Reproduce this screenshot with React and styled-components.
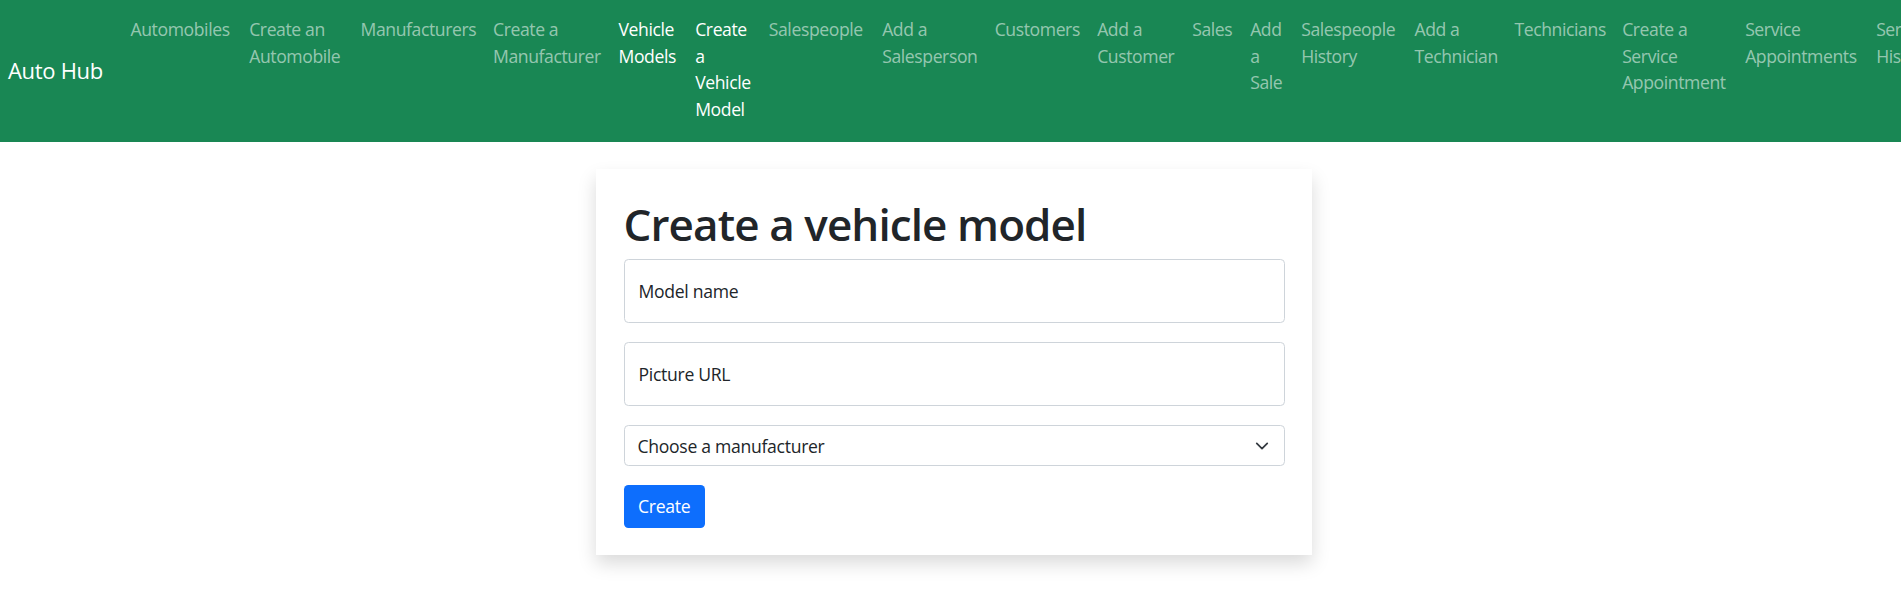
import styled, { createGlobalStyle } from "styled-components";

const GlobalStyle = createGlobalStyle`
  * {
    box-sizing: border-box;
  }
  body {
    margin: 0;
    background: #fff;
    color: #212529;
    font-family: "Open Sans", "Noto Sans", sans-serif;
    overflow-x: hidden;
  }
`;

const links = [
  { lines: ["Automobiles"], w: 118.7 },
  { lines: ["Create an", "Automobile"], w: 111.3 },
  { lines: ["Manufacturers"], w: 132.5 },
  { lines: ["Create a", "Manufacturer"], w: 125.5 },
  { lines: ["Vehicle", "Models"], w: 76.7, active: true },
  { lines: ["Create", "a", "Vehicle", "Model"], w: 73.6, active: true },
  { lines: ["Salespeople"], w: 113.4 },
  { lines: ["Add a", "Salesperson"], w: 112.5 },
  { lines: ["Customers"], w: 102.5 },
  { lines: ["Add a", "Customer"], w: 95 },
  { lines: ["Sales"], w: 58 },
  { lines: ["Add", "a", "Sale"], w: 51 },
  { lines: ["Salespeople", "History"], w: 113.3 },
  { lines: ["Add a", "Technician"], w: 100 },
  { lines: ["Technicians"], w: 107.7 },
  { lines: ["Create a", "Service", "Appointment"], w: 123 },
  { lines: ["Service", "Appointments"], w: 131 },
  { lines: ["Service", "History"], w: 110 },
];

const App = () => {
  return (
    <>
      <GlobalStyle />
      <Navbar>
        <Brand href="#">Auto Hub</Brand>
        <NavList>
          {links.map((link) => (
            <li key={link.lines.join(" ")}>
              <NavLink href="#" $w={link.w} $active={link.active}>
                {link.lines.map((line, i) => (
                  <Line key={i}>{line}</Line>
                ))}
              </NavLink>
            </li>
          ))}
        </NavList>
      </Navbar>

      <Main>
        <Card>
          <Title>Create a vehicle model</Title>
          <form onSubmit={(e) => e.preventDefault()}>
            <Group>
              <TextField type="text" placeholder="Model name" />
            </Group>
            <Group>
              <TextField type="text" placeholder="Picture URL" />
            </Group>
            <Group>
              <SelectWrap>
                <Select defaultValue="">
                  <option value="">Choose a manufacturer</option>
                </Select>
                <Chevron viewBox="0 0 16 16">
                  <path
                    d="m2 5 6 6 6-6"
                    fill="none"
                    stroke="#343a40"
                    strokeWidth="2"
                    strokeLinecap="round"
                    strokeLinejoin="round"
                  />
                </Chevron>
              </SelectWrap>
            </Group>
            <Button type="submit">Create</Button>
          </form>
        </Card>
      </Main>
    </>
  );
};
export default App;

const Navbar = styled.nav`
  display: flex;
  align-items: flex-start;
  height: 142px;
  padding-left: 8px;
  background: #198754;
  overflow: hidden;
`;

const Brand = styled.a`
  flex: none;
  align-self: center;
  width: 113.7px;
  margin-bottom: 2px;
  color: #fff;
  font-size: 22px;
  line-height: 33px;
  letter-spacing: -0.3px;
  text-decoration: none;
  white-space: nowrap;
`;

const NavList = styled.ul`
  display: flex;
  flex: none;
  margin: 0;
  padding: 0;
  list-style: none;
`;

const NavLink = styled.a`
  display: block;
  width: ${(p) => p.$w}px;
  padding: 16px 8.8px 0;
  color: ${(p) => (p.$active ? "#fff" : "rgba(255, 255, 255, 0.55)")};
  font-size: 17.6px;
  line-height: 26.6px;
  letter-spacing: -0.4px;
  text-decoration: none;
  white-space: nowrap;
`;

const Line = styled.span`
  display: block;
`;

const Main = styled.main`
  display: flex;
  justify-content: center;
  padding: 27px 0 40px 7px;
`;

const Card = styled.div`
  width: 716px;
  padding: 28.7px 27.5px 27px;
  background: #fff;
  box-shadow: 0 8.8px 17.6px rgba(0, 0, 0, 0.15);
`;

const Title = styled.h1`
  margin: 0 0 8.8px;
  color: #212529;
  font-size: 44px;
  font-weight: 600;
  line-height: 52.8px;
  letter-spacing: -0.9px;
`;

const Group = styled.div`
  margin-bottom: 19px;
`;

const TextField = styled.input`
  display: block;
  width: 100%;
  height: 64px;
  padding: 0 14px;
  border: 1px solid #ced4da;
  border-radius: 4.4px;
  background: #fff;
  color: #212529;
  font-family: inherit;
  font-size: 17.6px;
  letter-spacing: -0.3px;
  outline: none;

  &::placeholder {
    color: #212529;
    opacity: 1;
  }
`;

const SelectWrap = styled.div`
  position: relative;
`;

const Select = styled.select`
  display: block;
  width: 100%;
  height: 41px;
  padding: 0 40px 0 13px;
  border: 1px solid #ced4da;
  border-radius: 4.4px;
  background: #fff;
  color: #212529;
  font-family: inherit;
  font-size: 17.6px;
  letter-spacing: -0.3px;
  appearance: none;
  outline: none;
`;

const Chevron = styled.svg`
  position: absolute;
  top: 50%;
  right: 16px;
  width: 14px;
  height: 14px;
  transform: translateY(-50%);
  pointer-events: none;
`;

const Button = styled.button`
  height: 42.7px;
  padding: 0 14.5px;
  border: none;
  border-radius: 4.4px;
  background: #0d6efd;
  color: #fff;
  font-family: inherit;
  font-size: 17.6px;
  line-height: 1.5;
  letter-spacing: -0.3px;
  cursor: pointer;
`;
